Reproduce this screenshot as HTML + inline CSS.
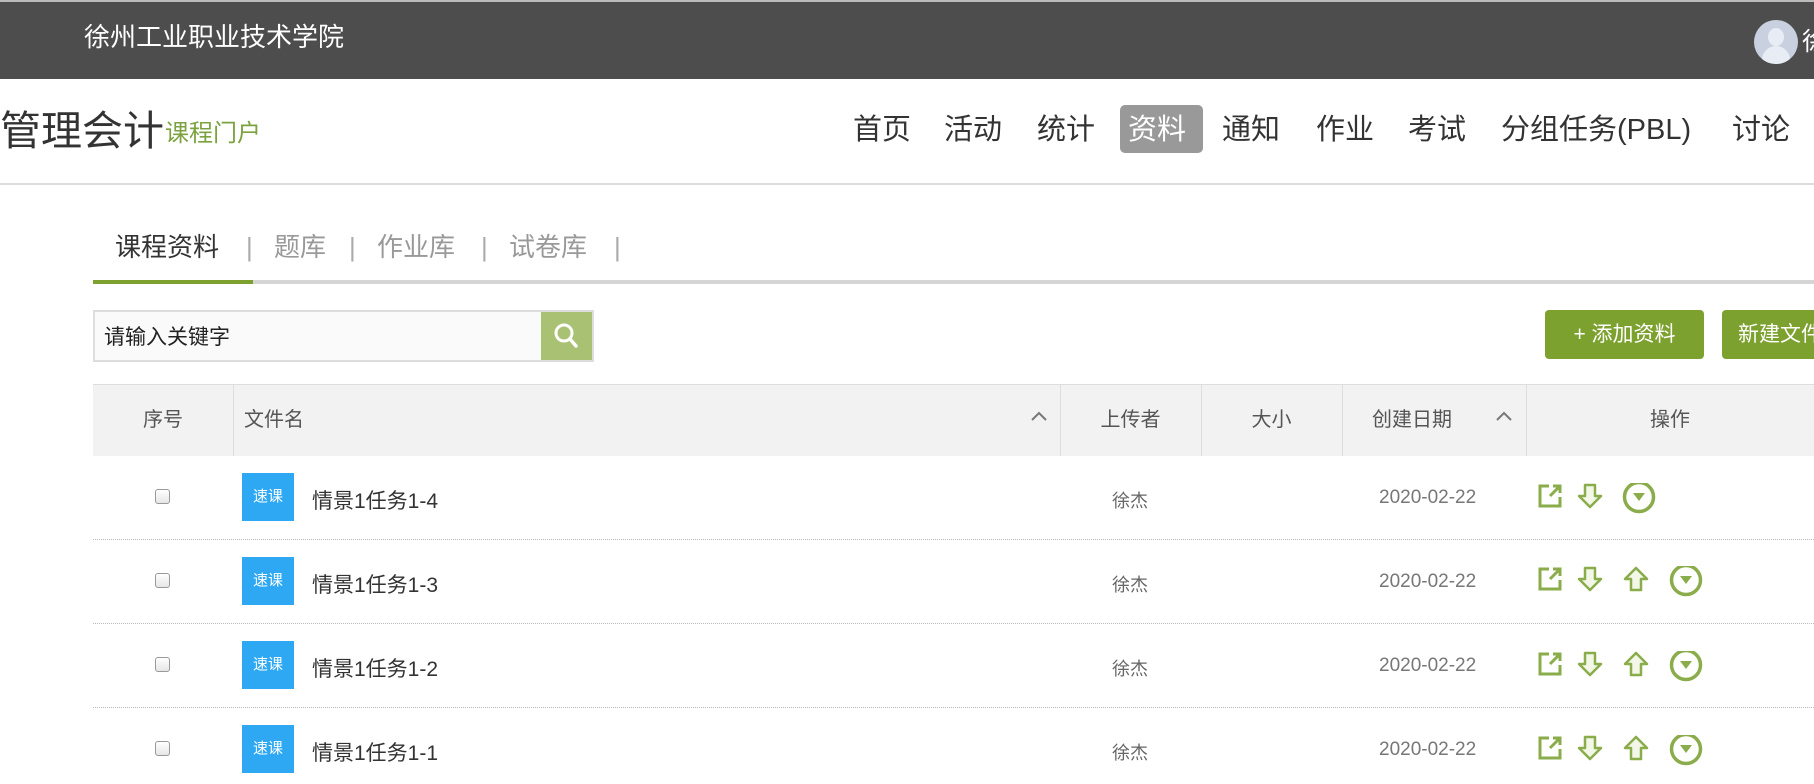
<!DOCTYPE html>
<html><head><meta charset="utf-8"><style>
*{margin:0;padding:0;box-sizing:border-box}
body{width:1814px;height:784px;overflow:hidden;background:#fff;font-family:"Liberation Sans","Noto Sans CJK SC",sans-serif;position:relative}
.a{position:absolute;white-space:nowrap}
.top{left:0;top:0;width:1814px;height:79px;background:#4d4d4d;border-top:2px solid #bbb}
.nav{top:110px;font-size:29px;color:#333;line-height:40px}
.th{top:384px;height:72px;line-height:72px;font-size:20px;color:#555;text-align:center}
.cb{width:15px;height:15px;border:1px solid #999;border-radius:3px;background:linear-gradient(#fff,#e6e6e6)}
.ic{width:52px;height:48px;background:#2ea8f2;color:#fff;font-size:15px;line-height:48px;text-align:center}
.nm{font-size:21px;color:#333}
.up{font-size:18px;color:#666}
.dt{font-size:19px;color:#777}
.sep{left:93px;width:1721px;border-top:1px dotted #bbb}
</style></head><body>
<div class="a top"></div>
<div class="a" style="left:84px;top:19px;font-size:26px;color:#fff;line-height:36px">徐州工业职业技术学院</div>
<div class="a" style="left:1754px;top:20px;width:44px;height:44px;border-radius:50%;background:#c9d0e0;overflow:hidden"><div style="position:absolute;left:14px;top:8px;width:16px;height:18px;border-radius:50%;background:#e8ecf4"></div><div style="position:absolute;left:8px;top:26px;width:28px;height:22px;border-radius:14px 14px 0 0;background:#e8ecf4"></div></div>
<div class="a" style="left:1802px;top:22px;font-size:25px;color:#fff">徐</div>
<div class="a" style="left:0;top:106px;font-size:41px;color:#333;line-height:50px">管理会计</div>
<div class="a" style="left:165px;top:118px;font-size:24px;color:#7ba23f;line-height:32px">课程门户</div>
<div class="a" style="left:1120px;top:105px;width:83px;height:48px;background:#999;border-radius:5px"></div>
<div class="a nav" style="left:853px">首页</div>
<div class="a nav" style="left:944px">活动</div>
<div class="a nav" style="left:1037px">统计</div>
<div class="a nav" style="left:1128px;color:#fff">资料</div>
<div class="a nav" style="left:1222px">通知</div>
<div class="a nav" style="left:1316px">作业</div>
<div class="a nav" style="left:1408px">考试</div>
<div class="a nav" style="left:1501px">分组任务(PBL)</div>
<div class="a nav" style="left:1732px">讨论</div>
<div class="a" style="left:0;top:183px;width:1814px;height:2px;background:#ddd"></div>
<div class="a" style="left:115px;top:230px;font-size:26px;color:#333;line-height:34px">课程资料</div>
<div class="a" style="left:246px;top:230px;font-size:26px;color:#aaa;line-height:34px">|</div>
<div class="a" style="left:274px;top:230px;font-size:26px;color:#999;line-height:34px">题库</div>
<div class="a" style="left:349px;top:230px;font-size:26px;color:#aaa;line-height:34px">|</div>
<div class="a" style="left:377px;top:230px;font-size:26px;color:#999;line-height:34px">作业库</div>
<div class="a" style="left:481px;top:230px;font-size:26px;color:#aaa;line-height:34px">|</div>
<div class="a" style="left:509px;top:230px;font-size:26px;color:#999;line-height:34px">试卷库</div>
<div class="a" style="left:614px;top:230px;font-size:26px;color:#aaa;line-height:34px">|</div>
<div class="a" style="left:93px;top:280px;width:1721px;height:4px;background:#d5d5d5"></div>
<div class="a" style="left:93px;top:280px;width:160px;height:4px;background:#7da12f"></div>
<div class="a" style="left:93px;top:310px;width:501px;height:52px;border:2px solid #ddd;background:#fafafa"></div>
<div class="a" style="left:104px;top:322px;font-size:21px;color:#222;line-height:32px">请输入关键字</div>
<div class="a" style="left:541px;top:312px;width:51px;height:48px;background:#a8c172"><svg width="51" height="48" viewBox="0 0 51 48"><circle cx="23" cy="21" r="8" fill="none" stroke="#fff" stroke-width="3"/><line x1="29" y1="27" x2="35" y2="34" stroke="#fff" stroke-width="3.5" stroke-linecap="round"/></svg></div>
<div class="a" style="left:1545px;top:310px;width:159px;height:49px;background:#7da12f;border-radius:4px;color:#fff;font-size:21px;line-height:49px;text-align:center">+ 添加资料</div>
<div class="a" style="left:1722px;top:310px;width:120px;height:49px;background:#7da12f;border-radius:4px;color:#fff;font-size:21px;line-height:49px;padding-left:16px">新建文件夹</div>
<div class="a" style="left:93px;top:384px;width:1721px;height:72px;background:#f2f2f2;border-top:1px solid #ddd"></div>
<div class="a" style="left:233px;top:384px;height:72px;border-left:1px solid #ddd"></div>
<div class="a" style="left:1060px;top:384px;height:72px;border-left:1px solid #ddd"></div>
<div class="a" style="left:1201px;top:384px;height:72px;border-left:1px solid #ddd"></div>
<div class="a" style="left:1342px;top:384px;height:72px;border-left:1px solid #ddd"></div>
<div class="a" style="left:1526px;top:384px;height:72px;border-left:1px solid #ddd"></div>
<div class="a th" style="left:93px;width:140px">序号</div>
<div class="a th" style="left:244px">文件名</div>
<div class="a th" style="left:1060px;width:141px">上传者</div>
<div class="a th" style="left:1201px;width:141px">大小</div>
<div class="a th" style="left:1372px">创建日期</div>
<div class="a th" style="left:1526px;width:288px">操作</div>
<svg class="a" style="left:1030px;top:410px" width="18" height="12"><polyline points="2,10 9,3 16,10" fill="none" stroke="#777" stroke-width="2"/></svg>
<svg class="a" style="left:1495px;top:410px" width="18" height="12"><polyline points="2,10 9,3 16,10" fill="none" stroke="#777" stroke-width="2"/></svg>
<div class="a sep" style="top:539px"></div>
<div class="a sep" style="top:623px"></div>
<div class="a sep" style="top:707px"></div>
<svg width="0" height="0" style="position:absolute"><defs>
<g id="ex"><path d="M12 3H3v20h20v-9" fill="none" stroke="#8aac4a" stroke-width="3"/><path d="M13 13L23 3M16 3h7v7" fill="none" stroke="#8aac4a" stroke-width="3"/></g>
<g id="dn"><path d="M8 2h10v11h6L13 24 2 13h6z" fill="#f2f7e8" stroke="#8aac4a" stroke-width="2.5" stroke-linejoin="round"/></g>
<g id="upa"><path d="M8 24h10V13h6L13 2 2 13h6z" fill="#f2f7e8" stroke="#8aac4a" stroke-width="2.5" stroke-linejoin="round"/></g>
<g id="ci"><circle cx="17" cy="17" r="14.5" fill="none" stroke="#8aac4a" stroke-width="3.5"/><path d="M11 13h12l-6 8z" fill="#8aac4a"/></g>
</defs></svg>
<div class="a cb" style="left:155px;top:489px"></div>
<div class="a ic" style="left:242px;top:473px">速课</div>
<div class="a nm" style="left:312px;top:485px">情景1任务1-4</div>
<div class="a up" style="left:1112px;top:487px">徐杰</div>
<div class="a dt" style="left:1379px;top:487px">2020-02-22</div>
<svg class="a" style="left:1537px;top:483px" width="170" height="34"><use href="#ex"/><g transform="translate(40,0)"><use href="#dn"/></g><g transform="translate(85,-3)"><use href="#ci"/></g></svg>

<div class="a cb" style="left:155px;top:573px"></div>
<div class="a ic" style="left:242px;top:557px">速课</div>
<div class="a nm" style="left:312px;top:569px">情景1任务1-3</div>
<div class="a up" style="left:1112px;top:571px">徐杰</div>
<div class="a dt" style="left:1379px;top:571px">2020-02-22</div>
<svg class="a" style="left:1537px;top:566px" width="170" height="34"><use href="#ex"/><g transform="translate(40,0)"><use href="#dn"/></g><g transform="translate(86,0)"><use href="#upa"/></g><g transform="translate(132,-3)"><use href="#ci"/></g></svg>

<div class="a cb" style="left:155px;top:657px"></div>
<div class="a ic" style="left:242px;top:641px">速课</div>
<div class="a nm" style="left:312px;top:653px">情景1任务1-2</div>
<div class="a up" style="left:1112px;top:655px">徐杰</div>
<div class="a dt" style="left:1379px;top:655px">2020-02-22</div>
<svg class="a" style="left:1537px;top:651px" width="170" height="34"><use href="#ex"/><g transform="translate(40,0)"><use href="#dn"/></g><g transform="translate(86,0)"><use href="#upa"/></g><g transform="translate(132,-3)"><use href="#ci"/></g></svg>

<div class="a cb" style="left:155px;top:741px"></div>
<div class="a ic" style="left:242px;top:725px">速课</div>
<div class="a nm" style="left:312px;top:737px">情景1任务1-1</div>
<div class="a up" style="left:1112px;top:739px">徐杰</div>
<div class="a dt" style="left:1379px;top:739px">2020-02-22</div>
<svg class="a" style="left:1537px;top:735px" width="170" height="34"><use href="#ex"/><g transform="translate(40,0)"><use href="#dn"/></g><g transform="translate(86,0)"><use href="#upa"/></g><g transform="translate(132,-3)"><use href="#ci"/></g></svg>
</body></html>
